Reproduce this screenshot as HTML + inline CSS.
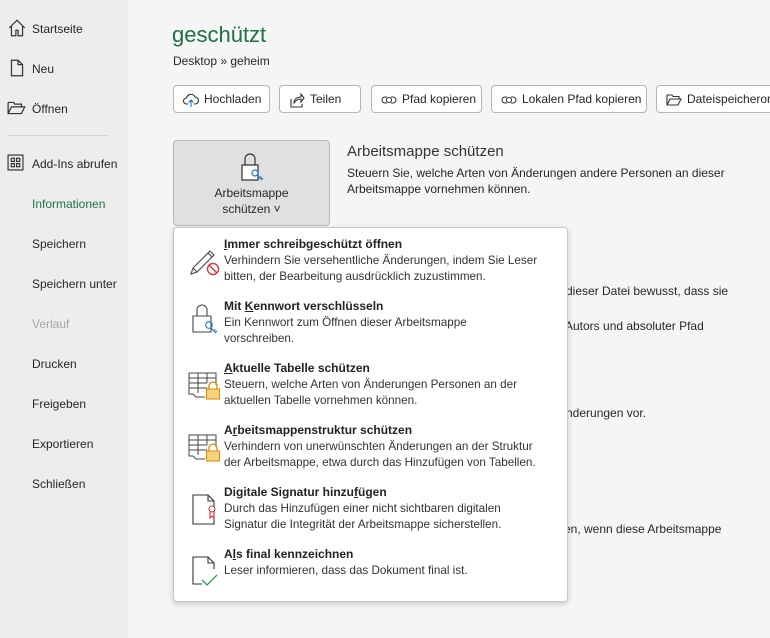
<!DOCTYPE html>
<html><head><meta charset="utf-8"><style>
*{margin:0;padding:0;box-sizing:border-box}
body{width:770px;height:638px;overflow:hidden;background:#f5f5f5;font-family:"Liberation Sans",sans-serif;font-size:12px;color:#262626;position:relative}
.side{position:absolute;left:0;top:0;width:128px;height:638px;background:#ededed}
.si{position:absolute;left:32px;font-size:12px;color:#262626;line-height:14px}
.ic{position:absolute;left:7px}
.a{position:absolute;white-space:nowrap}
.btn{position:absolute;top:85px;height:28px;border:1px solid #b5b5b5;border-radius:4px;background:#fff;font-size:12px;line-height:26px;padding-left:30px}
.btn svg{position:absolute;left:9px;top:6px}
.menu{position:absolute;left:173px;top:227px;width:395px;height:375px;background:#fff;border:1px solid #c8c8c8;border-radius:4px;box-shadow:0 2px 6px rgba(0,0,0,.18);z-index:2}
.it{position:absolute;left:50px;width:340px}
.it b{display:block;font-size:12px;line-height:15px;color:#222}
.it span{display:block;font-size:11.7px;line-height:15.5px;color:#333;margin-top:1px}
.mi{position:absolute;left:14px}
</style></head><body>
<div class="side">
<svg class="ic" style="top:18px" width="20" height="20" viewBox="0 0 18 18" fill="none" stroke="#333" stroke-width="1.1"><path d="M2 9 9 2l7 7M4 7v9h4v-5h2v5h4V7"/></svg>
<div class="si" style="top:22px">Startseite</div>
<svg class="ic" style="top:58px" width="20" height="20" viewBox="0 0 18 18" fill="none" stroke="#333" stroke-width="1.1"><path d="M4 2h6l4 4v10H4z M10 2v4h4"/></svg>
<div class="si" style="top:62px">Neu</div>
<svg class="ic" style="top:98px" width="20" height="20" viewBox="0 0 18 18" fill="none" stroke="#333" stroke-width="1.1"><path d="M1 4h5l1 1.5h6V8M1 4v10h12l3-6H4L1 14"/></svg>
<div class="si" style="top:102px">Öffnen</div>
<div style="position:absolute;left:8px;top:135px;width:100px;height:1px;background:#d0d0d0"></div>
<svg class="ic" style="top:154px" width="17" height="17" viewBox="0 0 16 16" fill="none" stroke="#333" stroke-width="1.1"><rect x="1" y="1" width="14" height="14"/><rect x="4" y="4" width="3" height="3"/><rect x="9" y="4" width="3" height="3"/><rect x="4" y="9" width="3" height="3"/><rect x="9" y="9" width="3" height="3"/></svg>
<div class="si" style="top:157px">Add-Ins abrufen</div>
<div class="si" style="top:197px;color:#1e7145">Informationen</div>
<div class="si" style="top:237px">Speichern</div>
<div class="si" style="top:277px">Speichern unter</div>
<div class="si" style="top:317px;color:#a6a6a6">Verlauf</div>
<div class="si" style="top:357px">Drucken</div>
<div class="si" style="top:397px">Freigeben</div>
<div class="si" style="top:437px">Exportieren</div>
<div class="si" style="top:477px">Schließen</div>
</div>

<div class="a" style="left:172px;top:22px;font-size:22px;color:#1e7145">geschützt</div>
<div class="a" style="left:173px;top:54px;font-size:12px">Desktop » geheim</div>

<div class="btn" style="left:173px;width:97px"><svg width="16" height="16" viewBox="0 0 16 16" fill="none" stroke="#333" stroke-width="1.1"><path d="M5 12H3.5a3 3 0 0 1 0-6 4.5 4.5 0 0 1 8.5-1 3.5 3.5 0 0 1 0 7H11"/><path d="M8 15V8M5.5 10.5 8 8l2.5 2.5" stroke="#1a73c8"/></svg>Hochladen</div>
<div class="btn" style="left:279px;width:82px"><svg width="16" height="16" viewBox="0 0 16 16" fill="none" stroke="#333" stroke-width="1.1"><path d="M2 7v8h11v-3M5 11c0-4 3-6 7-6V2l3 4-3 4V7c-3 0-5 1-7 4z"/></svg>Teilen</div>
<div class="btn" style="left:371px;width:111px"><svg width="16" height="16" viewBox="0 0 16 16" fill="none" stroke="#333" stroke-width="1.1"><path d="M6 5H4a3 3 0 0 0 0 6h2M10 5h2a3 3 0 0 1 0 6h-2"/><circle cx="8" cy="8" r="2.5"/></svg>Pfad kopieren</div>
<div class="btn" style="left:491px;width:156px"><svg width="16" height="16" viewBox="0 0 16 16" fill="none" stroke="#333" stroke-width="1.1"><path d="M6 5H4a3 3 0 0 0 0 6h2M10 5h2a3 3 0 0 1 0 6h-2"/><circle cx="8" cy="8" r="2.5"/></svg>Lokalen Pfad kopieren</div>
<div class="btn" style="left:656px;width:130px"><svg width="16" height="16" viewBox="0 0 16 16" fill="none" stroke="#333" stroke-width="1.1"><path d="M1 3h5l1 1.5h6V7M1 3v10h11l3-6H4L1 13"/></svg>Dateispeicherort</div>

<div style="position:absolute;left:173px;top:140px;width:157px;height:86px;background:#e0e0e0;border:1px solid #b8b8b8;border-radius:4px">
<svg style="position:absolute;left:67px;top:11px" width="26" height="30" viewBox="0 0 26 30" fill="none" stroke="#333" stroke-width="1.2"><path d="M4 13V7a5 5 0 0 1 10 0v6"/><path d="M1 13h16v15H1z" fill="#fff"/><circle cx="14" cy="21" r="3" stroke="#1a73c8"/><path d="M16 23l5 5M19 26l1.5-1.5M20.5 27.5 22 26" stroke="#1a73c8"/></svg>
<div style="position:absolute;left:0;width:155px;top:44px;text-align:center;line-height:16px;font-size:12px">Arbeitsmappe<br>schützen ˅</div>
</div>
<div class="a" style="left:347px;top:143px;font-size:15px;color:#333">Arbeitsmappe schützen</div>
<div class="a" style="left:347px;top:165px;line-height:16px">Steuern Sie, welche Arten von Änderungen andere Personen an dieser<br>Arbeitsmappe vornehmen können.</div>
<div class="a" style="left:566px;top:284px">dieser Datei bewusst, dass sie</div>
<div class="a" style="left:565px;top:319px">Autors und absoluter Pfad</div>
<div class="a" style="left:566px;top:406px">nderungen vor.</div>
<div class="a" style="left:564px;top:522px">en, wenn diese Arbeitsmappe</div>

<div class="menu">
<svg class="mi" style="top:16px" width="34" height="34" viewBox="0 0 34 34" fill="none" stroke="#444" stroke-width="1.1"><path d="M3 30l2-6L22 7l4 4L9 28z M5 24l4 4M20 9l4 4"/><circle cx="25" cy="25" r="5.5" stroke="#d9363e" stroke-width="1.4"/><path d="M21 21l8 8" stroke="#d9363e" stroke-width="1.4"/></svg>
<div class="it" style="top:9px"><b><u>I</u>mmer schreibgeschützt öffnen</b><span>Verhindern Sie versehentliche Änderungen, indem Sie Leser<br>bitten, der Bearbeitung ausdrücklich zuzustimmen.</span></div>
<svg class="mi" style="top:73px" width="34" height="36" viewBox="0 0 34 36" fill="none" stroke="#444" stroke-width="1.1"><path d="M9 15V9a5 5 0 0 1 10 0v6"/><path d="M5 15h18v16H5z" fill="#fff"/><circle cx="21" cy="24" r="3.3" stroke="#1a73c8"/><path d="M23 27l5 5M26 30l1.5-1.5M27.5 31.5 29 30" stroke="#1a73c8"/></svg>
<div class="it" style="top:71px"><b>Mit <u>K</u>ennwort verschlüsseln</b><span>Ein Kennwort zum Öffnen dieser Arbeitsmappe<br>vorschreiben.</span></div>
<svg class="mi" style="top:141px" width="34" height="34" viewBox="0 0 34 34" fill="none" stroke="#444" stroke-width="1"><path d="M1 4h27v12M1 4v21h4l3 3h9M1 9h27M1 14h18M1 19h18M10 4v20M19 4v10"/><path d="M21 20v-3a4 4 0 0 1 8 0v3" stroke="#e08a00" stroke-width="1.3"/><rect x="18.5" y="20" width="13" height="10" fill="#f7d37f" stroke="#e08a00"/></svg>
<div class="it" style="top:133px"><b><u>A</u>ktuelle Tabelle schützen</b><span>Steuern, welche Arten von Änderungen Personen an der<br>aktuellen Tabelle vornehmen können.</span></div>
<svg class="mi" style="top:203px" width="34" height="34" viewBox="0 0 34 34" fill="none" stroke="#444" stroke-width="1"><path d="M1 4h27v12M1 4v21h4l3 3h9M1 9h27M1 14h18M1 19h18M10 4v20M19 4v10"/><path d="M21 20v-3a4 4 0 0 1 8 0v3" stroke="#e08a00" stroke-width="1.3"/><rect x="18.5" y="20" width="13" height="10" fill="#f7d37f" stroke="#e08a00"/></svg>
<div class="it" style="top:195px"><b>A<u>r</u>beitsmappenstruktur schützen</b><span>Verhindern von unerwünschten Änderungen an der Struktur<br>der Arbeitsmappe, etwa durch das Hinzufügen von Tabellen.</span></div>
<svg class="mi" style="top:265px" width="34" height="34" viewBox="0 0 34 34" fill="none" stroke="#333" stroke-width="1.1"><path d="M5 2h15l6 6v23H5z M20 2v6h6"/><circle cx="24" cy="16" r="3" stroke="#d9363e" fill="#fff"/><path d="M22 19v6l2-2 2 2v-6" stroke="#d9363e"/></svg>
<div class="it" style="top:257px"><b>Digitale Signatur hinzu<u>f</u>ügen</b><span>Durch das Hinzufügen einer nicht sichtbaren digitalen<br>Signatur die Integrität der Arbeitsmappe sicherstellen.</span></div>
<svg class="mi" style="top:327px" width="34" height="34" viewBox="0 0 34 34" fill="none" stroke="#333" stroke-width="1.1"><path d="M26 14V8l-6-6H5v27h9 M20 2v6h6"/><path d="M14 25l5 5 10-10" stroke="#2e9e4f" stroke-width="1.3"/></svg>
<div class="it" style="top:319px"><b>A<u>l</u>s final kennzeichnen</b><span>Leser informieren, dass das Dokument final ist.</span></div>
</div>
</body></html>
